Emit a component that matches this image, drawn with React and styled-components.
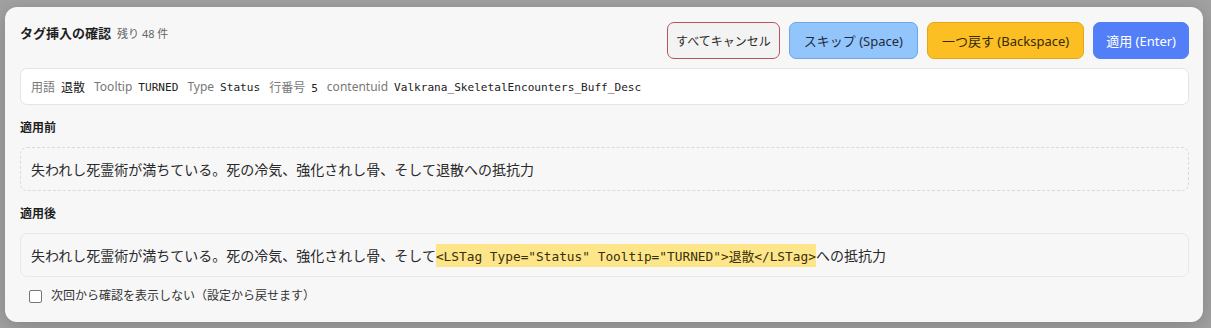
import React from 'react';
import styled, { createGlobalStyle, css } from 'styled-components';

const GlobalStyle = createGlobalStyle`
    html, body {
        margin: 0;
        padding: 0;
        background: #a1a1a1;
    }
    body {
        font-family: "Noto Sans", "Noto Sans CJK JP", sans-serif;
        color: #222;
    }
`;

const Overlay = styled.div`
    width: 1211px;
    height: 328px;
    box-sizing: border-box;
    padding: 7px 8px 6px 5px;
    background: #a1a1a1;
    display: flex;
    overflow: hidden;
`;

const Dialog = styled.div`
    flex: 1;
    box-sizing: border-box;
    background: #f7f7f8;
    border-radius: 12px;
    box-shadow: 0 4px 18px rgba(0, 0, 0, 0.18);
    padding: 15px 14px 16px 15px;
    display: flex;
    flex-direction: column;
`;

const Header = styled.div`
    display: flex;
    flex-direction: row;
    justify-content: space-between;
    align-items: flex-start;
`;

const Title = styled.div`
    margin-top: 1px;
    display: flex;
    align-items: baseline;
    gap: 6px;
`;

const TitleMain = styled.span`
    font-size: 13px;
    font-weight: 700;
    color: #1f1f1f;
`;

const TitleSub = styled.span`
    font-size: 11px;
    color: #666;
`;

const ButtonRow = styled.div`
    display: flex;
    gap: 9px;
`;

const variants = {
    cancel: css`
        padding: 0 8px;
        background: #f3f3f3;
        border-color: #b4545c;
        color: #2a2a2a;
        font-size: 12px;
    `,
    skip: css`
        padding: 0 14px;
        background: #93c5fd;
        border-color: #6aa6ee;
        color: #1d2b3c;
    `,
    back: css`
        padding: 0 14px;
        background: #fbbf24;
        border-color: #eaa512;
        color: #3a2a05;
    `,
    apply: css`
        background: #527ff7;
        border-color: #527ff7;
        color: #fff;
    `,
};

const Button = styled.button`
    height: 37px;
    padding: 0 12px;
    border: 1px solid;
    border-radius: 7px;
    font-family: "Noto Sans", "Noto Sans CJK JP", sans-serif;
    font-size: 13px;
    cursor: pointer;
    ${({ $variant }) => variants[$variant]};
`;

const MetaBox = styled.div`
    margin-top: 9px;
    height: 37px;
    box-sizing: border-box;
    background: #fff;
    border: 1px solid #e4e4e6;
    border-radius: 7px;
    padding: 0 10px;
    display: flex;
    align-items: center;
    gap: 9px;
    font-size: 12px;
`;

const MetaItem = styled.span`
    display: inline-flex;
    align-items: baseline;
    gap: 6px;
`;

const MetaLabel = styled.span`
    color: #777;
`;

const MetaValue = styled.span`
    color: #222;
    font-family: ${({ $mono }) => ($mono ? '"DejaVu Sans Mono", "Noto Sans CJK JP", monospace' : 'inherit')};
    font-size: ${({ $mono }) => ($mono ? '11.1px' : '12px')};
`;

const SectionLabel = styled.div`
    margin: 13px 0 10px;
    font-size: 12px;
    font-weight: 700;
    color: #1f1f1f;
    line-height: 19px;
`;

const TextBox = styled.div`
    height: 44px;
    box-sizing: border-box;
    border-radius: 7px;
    padding: 0 10px;
    display: flex;
    align-items: center;
    font-size: 14px;
    color: #2a2a2a;
    background: #f7f7f8;
    border: 1px ${({ $dashed }) => ($dashed ? 'dashed #dadadd' : 'solid #e9e9eb')};
    white-space: pre;
`;

const Tag = styled.span`
    background: #fde68a;
    color: #3b2f0a;
    font-family: "DejaVu Sans Mono", "Noto Sans CJK JP", monospace;
    font-size: 12.8px;
    padding: 2px 0;
`;

const CheckRow = styled.label`
    margin-top: 10px;
    display: flex;
    align-items: center;
    gap: 9px;
    padding-left: 9px;
    font-size: 12px;
    color: #333;
    line-height: 18px;
`;

const CheckBox = styled.span`
    width: 11px;
    height: 11px;
    border: 1px solid #777;
    border-radius: 2px;
    background: #fff;
`;

export default function App() {
    return (
        <>
            <GlobalStyle />
            <Overlay>
                <Dialog>
                    <Header>
                        <Title>
                            <TitleMain>タグ挿入の確認</TitleMain>
                            <TitleSub>残り 48 件</TitleSub>
                        </Title>
                        <ButtonRow>
                            <Button $variant="cancel">すべてキャンセル</Button>
                            <Button $variant="skip">スキップ (Space)</Button>
                            <Button $variant="back">一つ戻す (Backspace)</Button>
                            <Button $variant="apply">適用 (Enter)</Button>
                        </ButtonRow>
                    </Header>

                    <MetaBox>
                        <MetaItem><MetaLabel>用語</MetaLabel><MetaValue>退散</MetaValue></MetaItem>
                        <MetaItem><MetaLabel>Tooltip</MetaLabel><MetaValue $mono>TURNED</MetaValue></MetaItem>
                        <MetaItem><MetaLabel>Type</MetaLabel><MetaValue $mono>Status</MetaValue></MetaItem>
                        <MetaItem><MetaLabel>行番号</MetaLabel><MetaValue $mono>5</MetaValue></MetaItem>
                        <MetaItem><MetaLabel>contentuid</MetaLabel><MetaValue $mono>Valkrana_SkeletalEncounters_Buff_Desc</MetaValue></MetaItem>
                    </MetaBox>

                    <SectionLabel>適用前</SectionLabel>
                    <TextBox $dashed>失われし死霊術が満ちている。死の冷気、強化されし骨、そして退散への抵抗力</TextBox>

                    <SectionLabel>適用後</SectionLabel>
                    <TextBox>
                        失われし死霊術が満ちている。死の冷気、強化されし骨、そして<Tag>{'<LSTag Type="Status" Tooltip="TURNED">退散</LSTag>'}</Tag>への抵抗力
                    </TextBox>

                    <CheckRow>
                        <CheckBox />
                        次回から確認を表示しない（設定から戻せます）
                    </CheckRow>
                </Dialog>
            </Overlay>
        </>
    );
}
